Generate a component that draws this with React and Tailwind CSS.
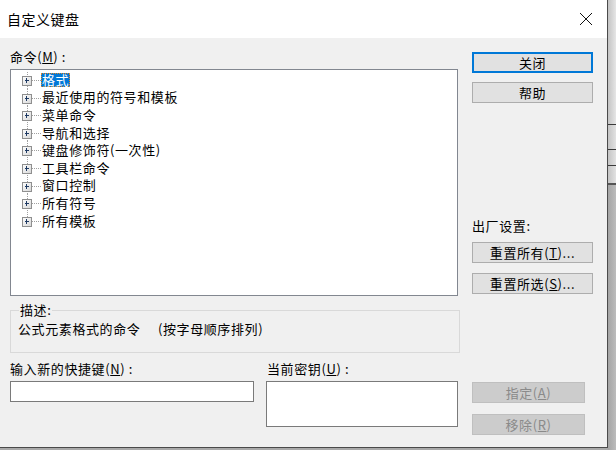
import React from 'react';

const cjk = { fontFamily: '"Noto Sans CJK SC", "Liberation Sans", sans-serif' };

const treeItems = [
  '格式',
  '最近使用的符号和模板',
  '菜单命令',
  '导航和选择',
  '键盘修饰符(一次性)',
  '工具栏命令',
  '窗口控制',
  '所有符号',
  '所有模板',
];

function TreeLines({ first, last }) {
  return (
    <svg width="30" height="17.6" viewBox="0 0 30 17.6" shapeRendering="crispEdges" className="shrink-0">
      <defs>
        <linearGradient id="pbox" x1="0" y1="0" x2="1" y2="1">
          <stop offset="0" stopColor="#ffffff" />
          <stop offset="1" stopColor="#d6d6d6" />
        </linearGradient>
      </defs>
      <line x1="16.5" y1={first ? 1 : 0} x2="16.5" y2={last ? 9 : 17.6} stroke="#a0a0a0" strokeDasharray="1 1" />
      <line x1="21" y1="9.5" x2="30" y2="9.5" stroke="#a0a0a0" strokeDasharray="1 1" />
      <rect x="11.5" y="5.5" width="9" height="9" fill="url(#pbox)" stroke="#8f8f8f" />
      <line x1="13.5" y1="10" x2="18.5" y2="10" stroke="#1f3a63" />
      <line x1="16" y1="7.5" x2="16" y2="12.5" stroke="#1f3a63" />
    </svg>
  );
}

function Btn({ children, primary, disabled, wide = true }) {
  let cls = 'h-[21px] flex items-center justify-center text-[13px] leading-[14px] tracking-[0.6px] ';
  cls += wide ? 'w-[121px] ' : 'w-[113px] ';
  if (primary) cls += 'border-2 border-[#0078d7] bg-[#e1e1e1] text-black';
  else if (disabled) cls += 'border border-[#bfbfbf] bg-[#cccccc] text-[#8a8a8a]';
  else cls += 'border border-[#adadad] bg-[#e1e1e1] text-black';
  return <div className={cls}>{children}</div>;
}

export default function App() {
  return (
    <div className="w-[616px] h-[450px] flex bg-[#a9a9a9] overflow-hidden" style={cjk}>
      <div className="w-[608px] h-[448px] shrink-0 flex flex-col bg-[#f0f0f0] border-r border-b border-[#4a4a4a]">
        <div className="h-[38px] bg-white flex items-center justify-between pl-[7px] pr-[14px]">
          <span className="text-[14px] leading-[16px] tracking-[0.5px] text-black">自定义键盘</span>
          <svg width="14" height="14" viewBox="0 0 14 14">
            <path d="M1 1 L13 13 M13 1 L1 13" stroke="#111" strokeWidth="1" />
          </svg>
        </div>

        <div className="flex pl-[10px] text-[13px] text-black">
          <div className="w-[450px] flex flex-col">
            <div className="mt-[11px] leading-[16px] tracking-[0.6px]">
              命令(<u>M</u>)&nbsp;:
            </div>
            <div className="mt-[4px] w-[448px] h-[227px] bg-white border border-[#828790] pt-[1px]">
              {treeItems.map((t, i) => (
                <div key={t} className="h-[17.6px] flex items-center">
                  <TreeLines first={i === 0} last={i === treeItems.length - 1} />
                  <span
                    className={
                      'border border-dotted leading-[12px] tracking-[0.6px] ' +
                      (i === 0 ? 'bg-[#0078d7] text-white border-[#e0872e]' : 'border-transparent')
                    }
                  >
                    {t}
                  </span>
                </div>
              ))}
            </div>

            <fieldset className="mt-[7px] w-[450px] h-[50px] border border-[#d9d9d9]">
              <legend className="ml-[8px] px-[1px] leading-[14px] tracking-[0.6px]">描述:</legend>
              <div className="mt-[5px] pl-[7px] leading-[14px] tracking-[0.6px]">
                公式元素格式的命令&nbsp;&nbsp;&nbsp;&nbsp;&nbsp;(按字母顺序排列)
              </div>
            </fieldset>

            <div className="flex mt-[8px]">
              <div className="w-[244px] flex flex-col">
                <div className="leading-[16px] tracking-[0.6px]">
                  输入新的快捷键(<u>N</u>)&nbsp;:
                </div>
                <div className="mt-[4px] h-[21px] bg-white border border-[#7a7a7a]" />
              </div>
              <div className="ml-[12px] w-[192px] flex flex-col">
                <div className="pl-[1px] leading-[16px] tracking-[0.6px]">
                  当前密钥(<u>U</u>)&nbsp;:
                </div>
                <div className="mt-[4px] h-[46px] bg-white border border-[#7a7a7a]" />
              </div>
            </div>
          </div>

          <div className="ml-[12px] w-[121px] flex flex-col">
            <div className="mt-[14px]">
              <Btn primary>关闭</Btn>
            </div>
            <div className="mt-[9px]">
              <Btn>帮助</Btn>
            </div>
            <div className="mt-[115px] leading-[16px] tracking-[0.6px]">出厂设置:</div>
            <div className="mt-[8px]">
              <Btn>重置所有(<u>T</u>)...</Btn>
            </div>
            <div className="mt-[10px]">
              <Btn>重置所选(<u>S</u>)...</Btn>
            </div>
            <div className="mt-[88px]">
              <Btn disabled wide={false}>指定(<u>A</u>)</Btn>
            </div>
            <div className="mt-[11px]">
              <Btn disabled wide={false}>移除(<u>R</u>)</Btn>
            </div>
          </div>
        </div>
      </div>

      <div className="flex-1 flex flex-col">
        <div className="h-[124px] bg-gradient-to-r from-[#c4c4c4] to-[#e6e6e6]" />
        <div className="h-[1px] bg-[#3a3a3a]" />
        <div className="h-[24px] bg-gradient-to-r from-[#c4c4c4] to-[#e2e2e2]" />
        <div className="h-[1px] bg-[#3a3a3a]" />
        <div className="h-[15px] bg-gradient-to-r from-[#c4c4c4] to-[#e2e2e2]" />
        <div className="h-[1px] bg-[#3a3a3a]" />
        <div className="h-[17px] bg-gradient-to-r from-[#c4c4c4] to-[#e2e2e2]" />
        <div className="h-[2px] bg-[#555555]" />
        <div className="flex-1 bg-gradient-to-r from-[#a4a4a4] to-[#bcbcbc]" />
      </div>
    </div>
  );
}
